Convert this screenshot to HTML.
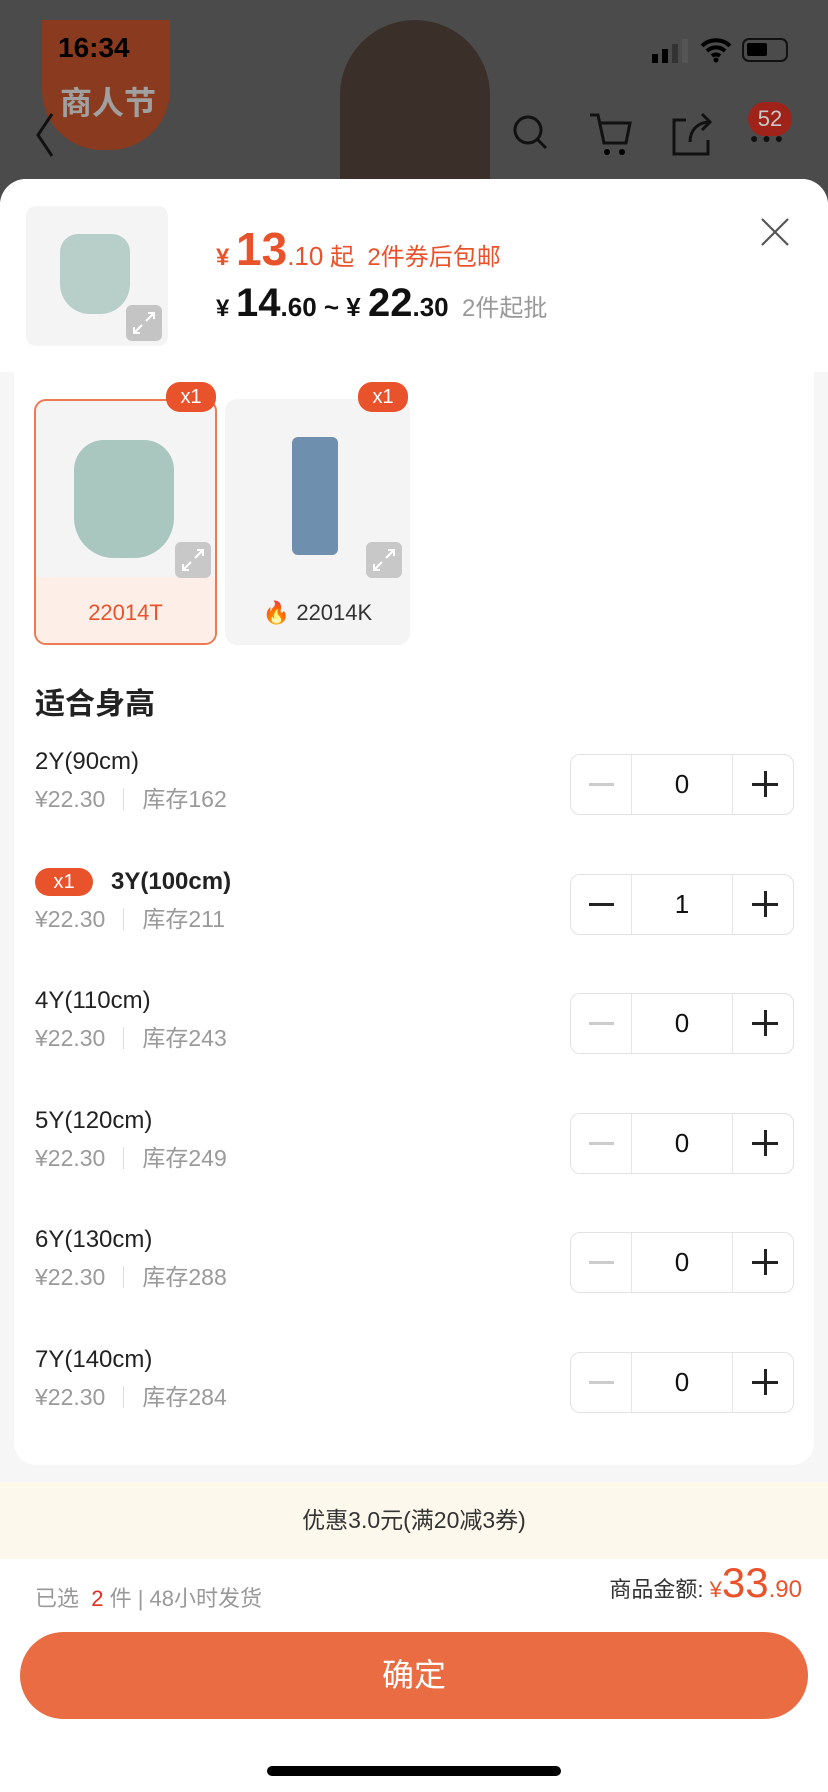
<!DOCTYPE html>
<html><head><meta charset="utf-8"><style>
*{margin:0;padding:0;box-sizing:border-box}
body{width:828px;height:1792px;overflow:hidden;font-family:"Liberation Sans","Noto Sans CJK SC",sans-serif;background:#4b4b4b;position:relative}
.abs{position:absolute}
.sheet{position:absolute;left:0;top:179px;width:828px;height:1613px;background:#f6f6f6;border-radius:26px 26px 0 0;overflow:hidden}
.head{position:absolute;left:0;top:0;width:828px;height:193px;background:#fff}
.card{position:absolute;left:14px;top:193px;width:800px;height:1093px;background:#fff;border-radius:0 0 22px 22px}
.row{position:absolute;left:35px;width:760px;height:80px}
.nm{position:absolute;left:0;top:0;font-size:24px;color:#222;line-height:28px;white-space:nowrap}
.pr{position:absolute;left:0;top:37px;font-size:23px;color:#9a9a9a;line-height:28px}
.pr i{display:inline-block;width:1px;height:22px;background:#ddd;margin:0 18px;vertical-align:-3px}
.step{position:absolute;left:535px;top:6px;width:224px;height:61px;border:1px solid #e2e2e2;border-radius:10px}
.step .d1{position:absolute;left:60px;top:0;width:1px;height:59px;background:#e6e6e6}
.step .d2{position:absolute;left:161px;top:0;width:1px;height:59px;background:#e6e6e6}
.step .m{position:absolute;left:18px;top:28px;width:25px;height:3px;background:#ccc}
.step .n{position:absolute;left:61px;width:100px;top:14px;text-align:center;font-size:26px;color:#111;line-height:30px}
.step .p1{position:absolute;left:181px;top:28px;width:26px;height:2.5px;background:#222}
.step .p2{position:absolute;left:193px;top:16px;width:2.5px;height:26px;background:#222}
.badge{background:#e8532b;color:#fff;border-radius:14px;font-size:20px;text-align:center}
</style></head><body>
<div class="abs" style="left:42px;top:20px;width:128px;height:130px;background:#8a3a1e;border-radius:0 0 60px 60px"></div>
<div class="abs" style="left:60px;top:78px;font-size:32px;color:#a0a0a0;font-weight:bold">商人节</div>
<div class="abs" style="left:340px;top:20px;width:150px;height:180px;background:#3b2f29;border-radius:75px 75px 20px 20px"></div>
<div class="abs" style="left:58px;top:32px;font-size:28px;color:#000;font-weight:bold">16:34</div>
<div class="abs" style="left:652px;top:54px;width:6px;height:9px;background:#000"></div>
<div class="abs" style="left:662px;top:49px;width:6px;height:14px;background:#000"></div>
<div class="abs" style="left:672px;top:44px;width:6px;height:19px;background:#333"></div>
<div class="abs" style="left:682px;top:39px;width:6px;height:24px;background:#555"></div>
<svg class="abs" style="left:700px;top:36px" width="32" height="28"><path d="M2 10a20 20 0 0 1 28 0M7 15a13 13 0 0 1 18 0M12 20a6 6 0 0 1 8 0" stroke="#000" stroke-width="4" fill="none"/><circle cx="16" cy="24" r="2.5"/></svg>
<div class="abs" style="left:742px;top:38px;width:46px;height:24px;border:2.5px solid #111;border-radius:7px"><div style="margin:3px;width:20px;height:13px;background:#000;border-radius:2px"></div></div>
<svg class="abs" style="left:30px;top:110px" width="30" height="50"><path d="M22 4L8 25l14 21" stroke="#111" stroke-width="3" fill="none"/></svg>
<svg class="abs" style="left:510px;top:112px" width="40" height="40"><circle cx="18" cy="18" r="13" stroke="#111" stroke-width="3" fill="none"/><path d="M27 27l9 9" stroke="#111" stroke-width="3"/></svg>
<svg class="abs" style="left:588px;top:112px" width="46" height="44"><path d="M2 3h8l6 28h22l4-20H12" stroke="#111" stroke-width="3" fill="none"/><circle cx="19" cy="40" r="3"/><circle cx="34" cy="40" r="3"/></svg>
<svg class="abs" style="left:670px;top:112px" width="44" height="46"><path d="M16 8H4v34h34V28M20 30c0-12 8-20 20-20M32 2l8 8-8 8" stroke="#111" stroke-width="3" fill="none"/></svg>
<div class="abs" style="left:748px;top:102px;width:44px;height:34px;background:#a0231a;border-radius:17px;color:#c8c8c8;font-size:22px;text-align:center;line-height:34px">52</div>
<div class="abs" style="left:750px;top:130px;width:46px;height:10px;font-size:14px;color:#111">● ● ●</div>

<div class="sheet">
 <div class="head"></div>
 <div class="abs" style="left:26px;top:27px;width:142px;height:140px;background:#f4f4f4;border-radius:10px"></div>
 <div class="abs" style="left:60px;top:55px;width:70px;height:80px;background:#b8cfc9;border-radius:18px 18px 30px 30px"></div>
 <div class="abs" style="left:126px;top:126px;width:36px;height:36px;background:#c4c4c4;border-radius:6px"></div>
 <svg class="abs" style="left:130px;top:130px" width="28" height="28"><path d="M16 12L24 4M18 4h6v6M12 16l-8 8M4 18v6h6" stroke="#fff" stroke-width="2" fill="none"/></svg>
 <div class="abs" style="left:216px;top:45px;line-height:50px;color:#e8532b;white-space:nowrap"><span style="font-size:24px;font-weight:bold">¥ </span><span style="font-size:46px;font-weight:bold">13</span><span style="font-size:26px">.10</span><span style="font-size:24px"> 起&nbsp; 2件券后包邮</span></div>
 <div class="abs" style="left:216px;top:99px;line-height:50px;color:#111;white-space:nowrap"><span style="font-size:24px;font-weight:bold">¥ </span><span style="font-size:40px;font-weight:bold">14</span><span style="font-size:26px;font-weight:bold">.60 ~ ¥ </span><span style="font-size:40px;font-weight:bold">22</span><span style="font-size:26px;font-weight:bold">.30</span><span style="font-size:24px;color:#999">&nbsp; 2件起批</span></div>
 <svg class="abs" style="left:760px;top:38px" width="30" height="30"><path d="M2 2l26 26M28 2L2 28" stroke="#555" stroke-width="2.2"/></svg>

 <div class="card">
  <div class="abs" style="left:20px;top:27px;width:183px;height:246px;border:2px solid #ec7a52;border-radius:12px;background:#f4f4f4;overflow:hidden"><div style="position:absolute;left:0;bottom:0;width:100%;height:66px;background:#fdeee8"></div></div>
  <div class="abs" style="left:60px;top:68px;width:100px;height:118px;background:#a9c7bf;border-radius:30px 30px 40px 40px"></div>
  <div class="abs" style="left:20px;top:227px;width:183px;text-align:center;font-size:22px;color:#e8532b;line-height:28px">22014T</div>
  <div class="abs" style="left:211px;top:27px;width:185px;height:246px;border-radius:12px;background:#f4f4f4"></div>
  <div class="abs" style="left:278px;top:65px;width:46px;height:118px;background:#6f8fae;border-radius:6px"></div>
  <div class="abs" style="left:211px;top:227px;width:185px;text-align:center;font-size:22px;color:#333;line-height:28px"><span style="color:#ef5a1f">🔥</span> 22014K</div>
  <div class="abs" style="left:161px;top:170px;width:36px;height:36px;background:#c8c8c8;border-radius:6px"></div>
  <div class="abs" style="left:352px;top:170px;width:36px;height:36px;background:#c8c8c8;border-radius:6px"></div>
  <svg class="abs" style="left:165px;top:174px" width="28" height="28"><path d="M16 12L24 4M18 4h6v6M12 16l-8 8M4 18v6h6" stroke="#fff" stroke-width="2" fill="none"/></svg>
  <svg class="abs" style="left:356px;top:174px" width="28" height="28"><path d="M16 12L24 4M18 4h6v6M12 16l-8 8M4 18v6h6" stroke="#fff" stroke-width="2" fill="none"/></svg>
  <div class="abs badge" style="left:152px;top:10px;width:50px;height:30px;line-height:30px">x1</div>
  <div class="abs badge" style="left:344px;top:10px;width:50px;height:30px;line-height:30px">x1</div>
  <div class="abs" style="left:21px;top:315px;font-size:30px;line-height:36px;font-weight:bold;color:#222">适合身高</div>
 </div>

 <div class="row" style="top:569px"><div class="nm">2Y(90cm)</div><div class="pr">¥22.30<i></i>库存162</div><div class="step"><div class="d1"></div><div class="d2"></div><div class="m"></div><div class="n">0</div><div class="p1"></div><div class="p2"></div></div></div>
 <div class="row" style="top:689px"><div class="nm" style="font-weight:bold"><span class="badge" style="display:inline-block;width:58px;height:28px;line-height:28px;font-weight:normal;margin-right:18px;vertical-align:top">x1</span>3Y(100cm)</div><div class="pr">¥22.30<i></i>库存211</div><div class="step"><div class="d1"></div><div class="d2"></div><div class="m" style="background:#222"></div><div class="n">1</div><div class="p1"></div><div class="p2"></div></div></div>
 <div class="row" style="top:808px"><div class="nm">4Y(110cm)</div><div class="pr">¥22.30<i></i>库存243</div><div class="step"><div class="d1"></div><div class="d2"></div><div class="m"></div><div class="n">0</div><div class="p1"></div><div class="p2"></div></div></div>
 <div class="row" style="top:928px"><div class="nm">5Y(120cm)</div><div class="pr">¥22.30<i></i>库存249</div><div class="step"><div class="d1"></div><div class="d2"></div><div class="m"></div><div class="n">0</div><div class="p1"></div><div class="p2"></div></div></div>
 <div class="row" style="top:1047px"><div class="nm">6Y(130cm)</div><div class="pr">¥22.30<i></i>库存288</div><div class="step"><div class="d1"></div><div class="d2"></div><div class="m"></div><div class="n">0</div><div class="p1"></div><div class="p2"></div></div></div>
 <div class="row" style="top:1167px"><div class="nm">7Y(140cm)</div><div class="pr">¥22.30<i></i>库存284</div><div class="step"><div class="d1"></div><div class="d2"></div><div class="m"></div><div class="n">0</div><div class="p1"></div><div class="p2"></div></div></div>

 <div class="abs" style="left:0;top:1303px;width:828px;height:77px;background:#fcf8ec;text-align:center;line-height:77px;font-size:23px;color:#333">优惠3.0元(满20减3券)</div>
 <div class="abs" style="left:0;top:1380px;width:828px;height:233px;background:#fff"></div>
 <div class="abs" style="left:35px;top:1402px;font-size:22px;color:#999">已选 <span style="color:#e02d1e">&nbsp;2</span> 件 | 48小时发货</div>
 <div class="abs" style="right:26px;top:1380px;white-space:nowrap;color:#e8532b"><span style="font-size:22px;color:#333">商品金额: </span><span style="font-size:22px">¥</span><span style="font-size:42px">33</span><span style="font-size:24px">.90</span></div>
 <div class="abs" style="left:20px;top:1453px;width:788px;height:87px;border-radius:44px;background:#e96c43;color:#fff;font-size:32px;text-align:center;line-height:87px">确定</div>
 <div class="abs" style="left:267px;top:1587px;width:294px;height:10px;border-radius:5px;background:#000"></div>
</div>
</body></html>
